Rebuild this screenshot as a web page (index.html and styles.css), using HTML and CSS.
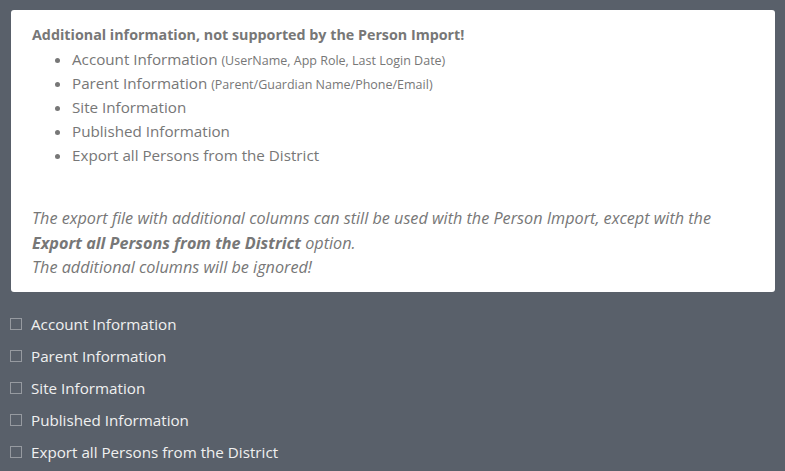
FILE: index.html
```html
<!DOCTYPE html>
<html lang="en">
<head>
  <meta charset="UTF-8" />
  <meta name="viewport" content="width=device-width, initial-scale=1.0" />
  <title>Person Export</title>
  <link rel="stylesheet" href="styles.css">
</head>
<body>
  <!-- Info box about the extra export columns -->
  <div class="info-box">
    <p class="info-title">Additional information, not supported by the Person Import!</p>
    <ul class="info-list">
      <li>Account Information <small>(UserName, App Role, Last Login Date)</small></li>
      <li>Parent Information <small>(Parent/Guardian Name/Phone/Email)</small></li>
      <li>Site Information</li>
      <li>Published Information</li>
      <li>Export all Persons from the District</li>
    </ul>
    <p class="info-note">
      The export file with additional columns can still be used with the Person Import, except with the<br>
      <b>Export all Persons from the District</b> option.<br>
      The additional columns will be ignored!
    </p>
  </div>

  <!-- Export options -->
  <div class="options">
    <label class="option"><input type="checkbox"><span class="box"></span>Account Information</label>
    <label class="option"><input type="checkbox"><span class="box"></span>Parent Information</label>
    <label class="option"><input type="checkbox"><span class="box"></span>Site Information</label>
    <label class="option"><input type="checkbox"><span class="box"></span>Published Information</label>
    <label class="option"><input type="checkbox"><span class="box"></span>Export all Persons from the District</label>
  </div>
</body>
</html>
```
FILE: styles.css
```css
/* Page */
body {
  margin: 0;
  padding: 10px 10px 0 11px;
  background-color: #59606a;
  font-family: "Open Sans", "DejaVu Sans", sans-serif;
}
/* White info panel */
.info-box {
  background-color: #fff;
  border-radius: 3px;
  padding: 13px 21px 12px 21px;
  color: #777;
}
.info-title {
  margin: 0;
  font-size: 14.3px;
  font-weight: bold;
  line-height: 24px;
}
.info-list {
  margin: 0;
  padding-left: 40px;
  font-size: 15.2px;
  line-height: 24px;
}
.info-list small {
  font-size: 12.5px;
  line-height: 1;
}
.info-note {
  margin: 39px 0 0 0;
  font-size: 16.2px;
  font-style: italic;
  line-height: 24.5px;
}
.info-note b {
  line-height: 1;
}
/* Checkbox list */
.options {
  margin-top: 16px;
}
.option {
  display: flex;
  align-items: center;
  height: 32px;
  color: #f0f0f0;
  font-size: 15.2px;
  cursor: pointer;
}
.option input {
  display: none;
}
.option .box {
  width: 10px;
  height: 10px;
  margin-left: -1px;
  border: 1px solid #969aa0;
  margin-right: 9px;
}
```
